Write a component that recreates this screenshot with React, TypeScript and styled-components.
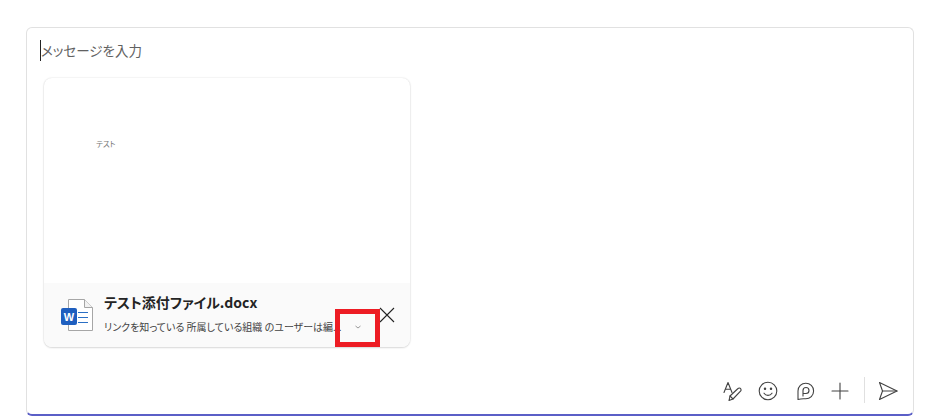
import styled, { createGlobalStyle } from 'styled-components';

const GlobalStyle = createGlobalStyle`
  html, body {
    margin: 0;
    background: #ffffff;
  }
  body {
    font-family: "Noto Sans CJK JP", "Liberation Sans", sans-serif;
    font-feature-settings: "palt";
  }
`;

const Page = styled.div`
  width: 933px;
  height: 420px;
  padding: 27px 19px 4px 26px;
  box-sizing: border-box;
  overflow: hidden;
`;

const Composer = styled.div`
  height: 389px;
  box-sizing: border-box;
  display: flex;
  flex-direction: column;
  background: #fff;
  border: 1px solid #e1e1e1;
  border-bottom: 2px solid #5b5fc7;
  border-radius: 6px;
  padding: 11px 13px 0 16px;
`;

const Placeholder = styled.div`
  height: 22px;
  display: flex;
  align-items: center;
  font-size: 13.5px;
  line-height: 22px;
  color: #616161;
  margin-left: -3px;
`;

const Caret = styled.span`
  width: 1px;
  height: 21px;
  background: #242424;
`;

const Card = styled.div`
  width: 366px;
  height: 269px;
  margin: 17px 0 0 1px;
  box-sizing: border-box;
  display: flex;
  flex-direction: column;
  border-radius: 8px;
  overflow: hidden;
  background: #fff;
  box-shadow: 0 0 2px rgba(0, 0, 0, 0.14), 0 1px 2px rgba(0, 0, 0, 0.12);
`;

const Preview = styled.div`
  flex: 1;
  padding: 61px 0 0 52px;
  font-size: 7.6px;
  line-height: 10px;
  color: #777;
`;

const Footer = styled.div`
  position: relative;
  height: 64px;
  box-sizing: border-box;
  background: #fafafa;
  display: flex;
  align-items: flex-start;
  padding: 16px 0 0 17px;
`;

const FileIcon = styled.svg`
  width: 33px;
  height: 33px;
  flex: none;
`;

const FileInfo = styled.div`
  margin-left: 10px;
  margin-top: -7px;
  width: 250px;
`;

const FileName = styled.div`
  font-size: 14px;
  line-height: 20px;
  font-weight: 700;
  color: #242424;
  white-space: nowrap;
`;

const LinkInfo = styled.div`
  margin-top: 7px;
  font-size: 10px;
  line-height: 16px;
  color: #424242;
  white-space: nowrap;
`;

const Chevron = styled.svg`
  width: 8px;
  height: 6px;
  flex: none;
  margin-top: 25px;
`;

const Close = styled.svg`
  width: 16px;
  height: 16px;
  flex: none;
  margin: 8px 0 0 17px;
`;

const Highlight = styled.div`
  position: absolute;
  left: 291px;
  top: 26px;
  width: 45px;
  height: 38px;
  box-sizing: border-box;
  border: 5px solid #ed1c24;
`;

const Toolbar = styled.div`
  margin-top: auto;
  height: 36px;
  box-sizing: border-box;
  display: flex;
  align-items: center;
  justify-content: flex-end;
  padding: 0 1px 10px 0;
`;

const ToolIcon = styled.svg<{ $gap: number }>`
  width: 22px;
  height: 22px;
  margin-left: ${(p) => p.$gap}px;
  flex: none;
  fill: none;
  stroke: #424242;
  stroke-width: 1.1;
  stroke-linecap: round;
  stroke-linejoin: round;
`;

const Divider = styled.span`
  width: 1px;
  height: 26px;
  background: #e0e0e0;
  margin: 0 0 2px 13px;
`;

export default function App() {
  return (
    <Page>
      <GlobalStyle />
      <Composer>
        <Placeholder>
          <Caret />
          メッセージを入力
        </Placeholder>
        <Card>
          <Preview>テスト</Preview>
          <Footer>
            <FileIcon viewBox="0 0 33 33">
              <path d="M7.5 .5h16l8 8v23h-24z" fill="#fff" stroke="#a6a6a6" strokeWidth="1" />
              <path d="M23.5 .5v8h8" fill="#f2f2f2" stroke="#a6a6a6" strokeWidth="1" />
              <path d="M17 13.5h10M17 18.5h10M17 23.5h10" stroke="#2b6fc4" strokeWidth="1.2" />
              <rect x="0" y="9" width="16" height="17" rx="2" fill="#1f5fbf" />
              <text
                x="8"
                y="21.5"
                textAnchor="middle"
                fontSize="11"
                fontWeight="700"
                fill="#fff"
                fontFamily="Liberation Sans, sans-serif"
              >
                W
              </text>
            </FileIcon>
            <FileInfo>
              <FileName>テスト添付ファイル.docx</FileName>
              <LinkInfo>リンクを知っている 所属している組織 のユーザーは編...</LinkInfo>
            </FileInfo>
            <Chevron viewBox="0 0 8 6">
              <path d="M1.5 2l2.5 2 2.5-2" fill="none" stroke="#9a9a9a" strokeWidth="1" />
            </Chevron>
            <Close viewBox="0 0 16 16">
              <path d="M1 1l14 14M15 1L1 15" fill="none" stroke="#242424" strokeWidth="1.1" />
            </Close>
            <Highlight />
          </Footer>
        </Card>
        <Toolbar>
          <ToolIcon $gap={0} viewBox="0 0 22 22">
            <path d="M3 12.5L7 2.5 11 12.5M4.4 9.2h5.2" />
            <path d="M8 20.5l1-4.5 8-7.5c1.2-1.2 3.6-.2 3 2.2L12 19z" />
            <path d="M9 16l3 3" />
          </ToolIcon>
          <ToolIcon $gap={14} viewBox="0 0 22 22">
            <circle cx="11" cy="11" r="8.8" />
            <path d="M7 13.2c1 1.5 2.4 2.2 4 2.2s3-.7 4-2.2" />
            <circle cx="8" cy="8.8" r=".7" fill="#424242" />
            <circle cx="14" cy="8.8" r=".7" fill="#424242" />
          </ToolIcon>
          <ToolIcon $gap={15} viewBox="0 0 22 22">
            <path d="M4 19.5V11a7.8 7.8 0 1 1 7.8 7.8H9.5c-2 0-3.5.2-5.5.7z" />
            <path d="M9 16V10.5a3 3 0 1 1 3 3H9" />
          </ToolIcon>
          <ToolIcon $gap={13} viewBox="0 0 22 22">
            <path d="M11 3v16M3 11h16" />
          </ToolIcon>
          <Divider />
          <ToolIcon $gap={12} viewBox="0 0 22 22">
            <path d="M2.5 2.5L20 11 2.5 19.5 5.5 11z" />
            <path d="M5.5 11H20" />
          </ToolIcon>
        </Toolbar>
      </Composer>
    </Page>
  );
}
